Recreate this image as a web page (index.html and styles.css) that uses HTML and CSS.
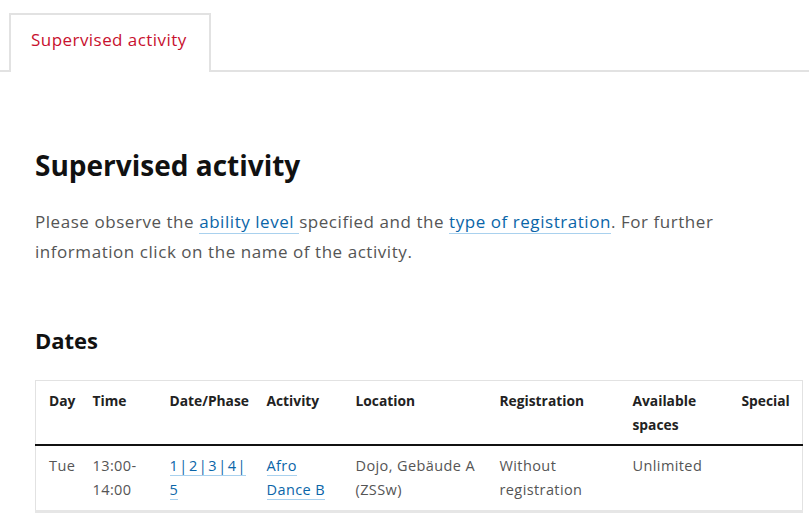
FILE: index.html
```html
<!DOCTYPE html>
<html lang="en">
<head>
<meta charset="utf-8">
<title>Supervised activity</title>
<link rel="stylesheet" href="styles.css">
</head>
<body>
<div class="tabs">
  <div class="tab-spacer"></div>
  <div class="tab active">Supervised activity</div>
  <div class="tab-rest"></div>
</div>
<main class="content">
  <h1 class="title">Supervised activity</h1>
  <p class="intro">Please observe the <a href="#" class="link">ability level </a>specified and the <a href="#" class="link">type of registration</a>. For further information click on the name of the activity.</p>
  <h2 class="subtitle">Dates</h2>
  <table class="dates">
    <thead>
      <tr>
        <th class="c-day">Day</th>
        <th class="c-time">Time</th>
        <th class="c-date">Date/Phase</th>
        <th class="c-act">Activity</th>
        <th class="c-loc">Location</th>
        <th class="c-reg">Registration</th>
        <th class="c-spaces">Available spaces</th>
        <th class="c-special">Special</th>
      </tr>
    </thead>
    <tbody>
      <tr>
        <td>Tue</td>
        <td>13:00-<br>14:00</td>
        <td><a href="#" class="link phases">1 | 2 | 3 | 4 |</a><br><a href="#" class="link">5</a></td>
        <td><a href="#" class="link">Afro</a><br><a href="#" class="link">Dance B</a></td>
        <td>Dojo, Gebäude A<br>(ZSSw)</td>
        <td>Without<br>registration</td>
        <td>Unlimited</td>
        <td></td>
      </tr>
    </tbody>
  </table>
</main>
</body>
</html>
```
FILE: styles.css
```css
html, body {
  margin: 0;
  padding: 0;
  background: #fff;
}
body {
  font-family: "Open Sans", "Noto Sans", sans-serif;
  color: #555;
  width: 809px;
  overflow: hidden;
}
.tabs {
  display: flex;
  align-items: flex-end;
  padding-top: 13px;
}
.tab-spacer {
  width: 9px;
  border-bottom: 2px solid #e2e2e2;
  align-self: stretch;
}
.tab {
  box-sizing: border-box;
  border: 2px solid #e2e2e2;
  border-bottom: none;
  padding: 13px 10px 20px 20px;
  color: #c8102e;
  font-size: 17px;
  line-height: 24px;
  letter-spacing: 0.45px;
  width: 202px;
}
.tab-rest {
  flex: 1;
  border-bottom: 2px solid #e2e2e2;
}
.content {
  padding: 0 7px 0 35px;
}
.title {
  margin: 73px 0 0;
  font-size: 28px;
  line-height: 40px;
  font-weight: 700;
  color: #111;
}
.intro {
  margin: 22px 0 0;
  font-size: 17px;
  line-height: 30px;
  letter-spacing: 0.55px;
  color: #555;
}
.link {
  color: #0a65a8;
  text-decoration: none;
  border-bottom: 1px solid #a9d1ee;
}
.phases {
  white-space: nowrap;
  letter-spacing: 0;
  word-spacing: -2.2px;
}
.subtitle {
  margin: 58px 0 0;
  font-size: 22px;
  line-height: 30px;
  font-weight: 700;
  color: #111;
}
.dates {
  margin-top: 25px;
  border-collapse: collapse;
  width: 767px;
  table-layout: fixed;
  line-height: 24px;
  border: 1px solid #e2e2e2;
  border-bottom: none;
}
.dates th, .dates td {
  box-sizing: border-box;
}
.dates th {
  text-align: left;
  vertical-align: top;
  font-weight: 700;
  font-size: 13.8px;
  color: #222;
  padding: 8px 4px 7px 13px;
  border-bottom: 2px solid #111;
}
.dates td {
  vertical-align: top;
  font-size: 14.5px;
  letter-spacing: 0.4px;
  padding: 8px 4px 8px 13px;
  border-bottom: 3px solid #e6e6e6;
}
.c-day { width: 44px; }
.c-time { width: 77px; }
.c-date { width: 97px; }
.c-act { width: 89px; }
.c-loc { width: 144px; }
.c-reg { width: 133px; }
.c-spaces { width: 109px; }
.c-special { width: 74px; }
```
